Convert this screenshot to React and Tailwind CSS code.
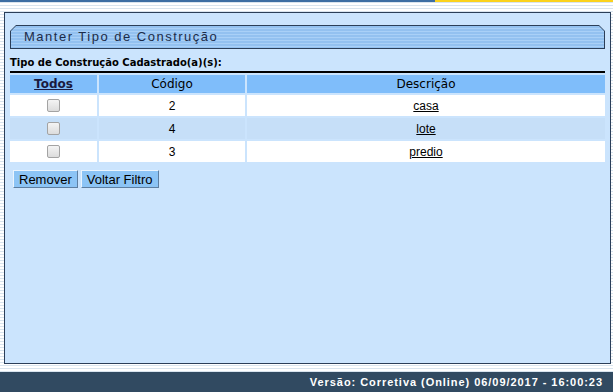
import React from 'react';

const rows = [
  { codigo: '2', descricao: 'casa', bg: 'bg-white' },
  { codigo: '4', descricao: 'lote', bg: 'bg-[#c6dff8]' },
  { codigo: '3', descricao: 'predio', bg: 'bg-white' },
];

function Checkbox() {
  return (
    <span className="inline-block w-[13px] h-[13px] rounded-[2px] border border-[#a3a3a3] bg-gradient-to-b from-[#f4f4f4] to-[#dcdcdc]" />
  );
}

export default function App() {
  return (
    <div className="w-[613px] h-[392px] flex flex-col overflow-hidden bg-[repeating-linear-gradient(to_bottom,#ffffff_0px,#ffffff_2px,#d9e4ee_2px,#d9e4ee_3px)]">
      {/* top strip */}
      <div className="h-[2px] flex">
        <div className="w-[435px] bg-[#3d6ea3]" />
        <div className="flex-1 bg-[#fbd21d]" />
      </div>

      <div className="h-[10px]" />

      {/* main panel */}
      <div className="ml-[4px] mr-[2px] h-[352px] border border-[#2b3e58] bg-[#cbe4fd] flex flex-col">
        {/* title bar */}
        <div className="mt-[12px] ml-[5px] mr-[5px] h-[24px] bg-[#2b3e58] p-[1px] [clip-path:polygon(6px_0,calc(100%-6px)_0,100%_6px,100%_100%,0_100%,0_6px)]">
          <div className="h-full flex items-center pl-[13px] bg-[repeating-linear-gradient(to_bottom,#93c1f0_0px,#93c1f0_2px,#a9d0f7_2px,#a9d0f7_3px)] [clip-path:polygon(5px_0,calc(100%-5px)_0,100%_5px,100%_100%,0_100%,0_5px)]">
            <span className="font-['Liberation_Sans',Arial,sans-serif] text-[13px] tracking-[1.5px] text-[#1c2b48]">
              Manter Tipo de Construção
            </span>
          </div>
        </div>

        <div className="mt-[7px] ml-[5px] font-['DejaVu_Sans',Verdana,sans-serif] font-bold text-[10px] leading-[13px] text-black">
          Tipo de Construção Cadastrado(a)(s):
        </div>

        {/* table */}
        <div className="mt-[2px] ml-[5px] mr-[5px]">
          <div className="h-[2px] bg-black" />
          <div className="mt-[2px] grid grid-cols-[87px_146px_1fr] gap-[2px]">
            <div className="h-[18px] bg-[#7fbdfa] flex items-center justify-center font-['DejaVu_Sans',Verdana,sans-serif] font-bold text-[12px] underline text-[#1a1a40]">
              Todos
            </div>
            <div className="h-[18px] bg-[#7fbdfa] flex items-center justify-center font-['DejaVu_Sans',Verdana,sans-serif] text-[12px] text-black">
              Código
            </div>
            <div className="h-[18px] bg-[#7fbdfa] flex items-center justify-center font-['DejaVu_Sans',Verdana,sans-serif] text-[12px] text-black">
              Descrição
            </div>
            {rows.map((r) => (
              <React.Fragment key={r.codigo}>
                <div className={`h-[21px] ${r.bg} flex items-center justify-center`}>
                  <Checkbox />
                </div>
                <div className={`h-[21px] ${r.bg} flex items-center justify-center font-['Liberation_Sans',Arial,sans-serif] text-[12px] text-black`}>
                  {r.codigo}
                </div>
                <div className={`h-[21px] ${r.bg} flex items-center justify-center font-['Liberation_Sans',Arial,sans-serif] text-[12px] text-black underline`}>
                  {r.descricao}
                </div>
              </React.Fragment>
            ))}
          </div>
        </div>

        {/* buttons */}
        <div className="mt-[8px] ml-[8px] flex gap-[3px]">
          <button className="h-[18px] px-[5px] bg-[#8cc4f5] border border-[#eaf4fe] border-r-[#5d7ea0] border-b-[#5d7ea0] font-['Liberation_Sans',Arial,sans-serif] text-[13px] leading-[15px] text-black">
            Remover
          </button>
          <button className="h-[18px] px-[5px] bg-[#8cc4f5] border border-[#eaf4fe] border-r-[#5d7ea0] border-b-[#5d7ea0] font-['Liberation_Sans',Arial,sans-serif] text-[13px] leading-[15px] text-black">
            Voltar Filtro
          </button>
        </div>
      </div>

      <div className="h-[8px]" />

      {/* footer */}
      <div className="flex-1 bg-[#314a61] flex items-center justify-end pr-[10px]">
        <span className="font-['Liberation_Sans',Arial,sans-serif] font-bold text-[11px] tracking-[0.95px] text-white">
          Versão: Corretiva (Online) 06/09/2017 - 16:00:23
        </span>
      </div>
    </div>
  );
}
